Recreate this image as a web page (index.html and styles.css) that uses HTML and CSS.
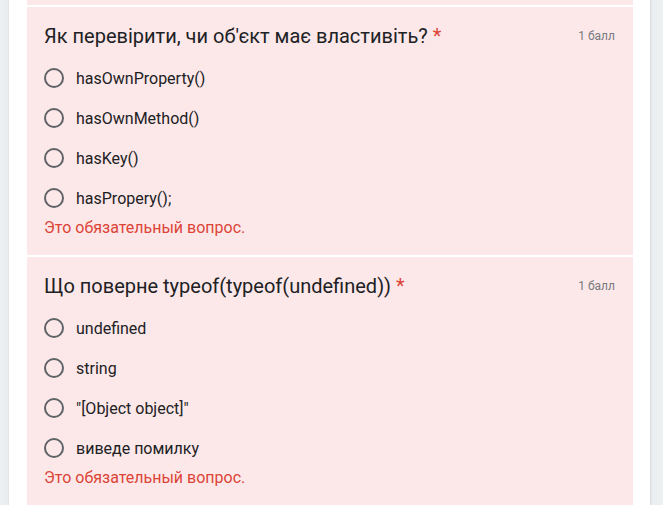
FILE: index.html
```html
<!DOCTYPE html>
<html lang="uk">
<head>
<meta charset="utf-8">
<link rel="stylesheet" href="styles.css">
</head>
<body>
<div class="page">
  <div class="gutter gutter-left"></div>
  <main class="column">
    <section class="card card-prev"></section>
    <section class="card">
      <div class="head">
        <h2 class="title">Як перевірити, чи об'єкт має властивіть? <span class="req">*</span></h2>
        <span class="points">1 балл</span>
      </div>
      <ul class="options">
        <li class="option"><span class="radio"></span><span class="label">hasOwnProperty()</span></li>
        <li class="option"><span class="radio"></span><span class="label">hasOwnMethod()</span></li>
        <li class="option"><span class="radio"></span><span class="label">hasKey()</span></li>
        <li class="option"><span class="radio"></span><span class="label">hasPropery();</span></li>
      </ul>
      <p class="error">Это обязательный вопрос.</p>
    </section>
    <section class="card">
      <div class="head">
        <h2 class="title">Що поверне typeof(typeof(undefined)) <span class="req">*</span></h2>
        <span class="points">1 балл</span>
      </div>
      <ul class="options">
        <li class="option"><span class="radio"></span><span class="label">undefined</span></li>
        <li class="option"><span class="radio"></span><span class="label">string</span></li>
        <li class="option"><span class="radio"></span><span class="label">"[Object object]"</span></li>
        <li class="option"><span class="radio"></span><span class="label">виведе помилку</span></li>
      </ul>
      <p class="error">Это обязательный вопрос.</p>
    </section>
  </main>
  <div class="gutter gutter-right"></div>
</div>
</body>
</html>
```

FILE: styles.css
```css
* { box-sizing: border-box; }
html, body {
  margin: 0;
  padding: 0;
  height: 100%;
  overflow: hidden;
  background: #ffffff;
  font-family: Roboto, "Noto Sans", Arial, sans-serif;
}
.page {
  display: flex;
  height: 505px;
}
.gutter {
  flex: 0 0 auto;
  height: 100%;
}
.gutter-left {
  width: 9px;
  background: linear-gradient(to right, #eef1f2, #e9ecee 85%, #dfe3e5);
}
.gutter-right {
  width: 13px;
  background: linear-gradient(to right, #d9dddf, #eceff1 20%, #eef1f2);
}
.column {
  flex: 1 1 auto;
  padding: 0 17px 0 18px;
  display: flex;
  flex-direction: column;
  gap: 2px;
  margin-top: -2px;
}
.card {
  background: #fde8e9;
  padding: 17px 17px 17px 17px;
  flex: 0 0 auto;
}
.card-prev {
  height: 7px;
  padding: 0;
}
.head {
  display: flex;
  justify-content: space-between;
  align-items: flex-start;
}
.title {
  margin: 0;
  font-weight: 400;
  font-size: 20px;
  line-height: 24px;
  color: #202124;
}
.req { color: #db4437; }
.points {
  font-size: 12px;
  line-height: 24px;
  color: #777a7e;
  padding-right: 1px;
}
.options {
  list-style: none;
  margin: 10px 0 0;
  padding: 0;
}
.option {
  height: 40px;
  display: flex;
  align-items: center;
}
.radio {
  width: 20px;
  height: 20px;
  border: 2px solid #5f6368;
  border-radius: 50%;
  flex: 0 0 auto;
  margin-right: 12px;
}
.label {
  font-size: 16px;
  color: #202124;
}
.error {
  margin: 0;
  font-size: 16px;
  line-height: 20px;
  color: #db4437;
}
```
